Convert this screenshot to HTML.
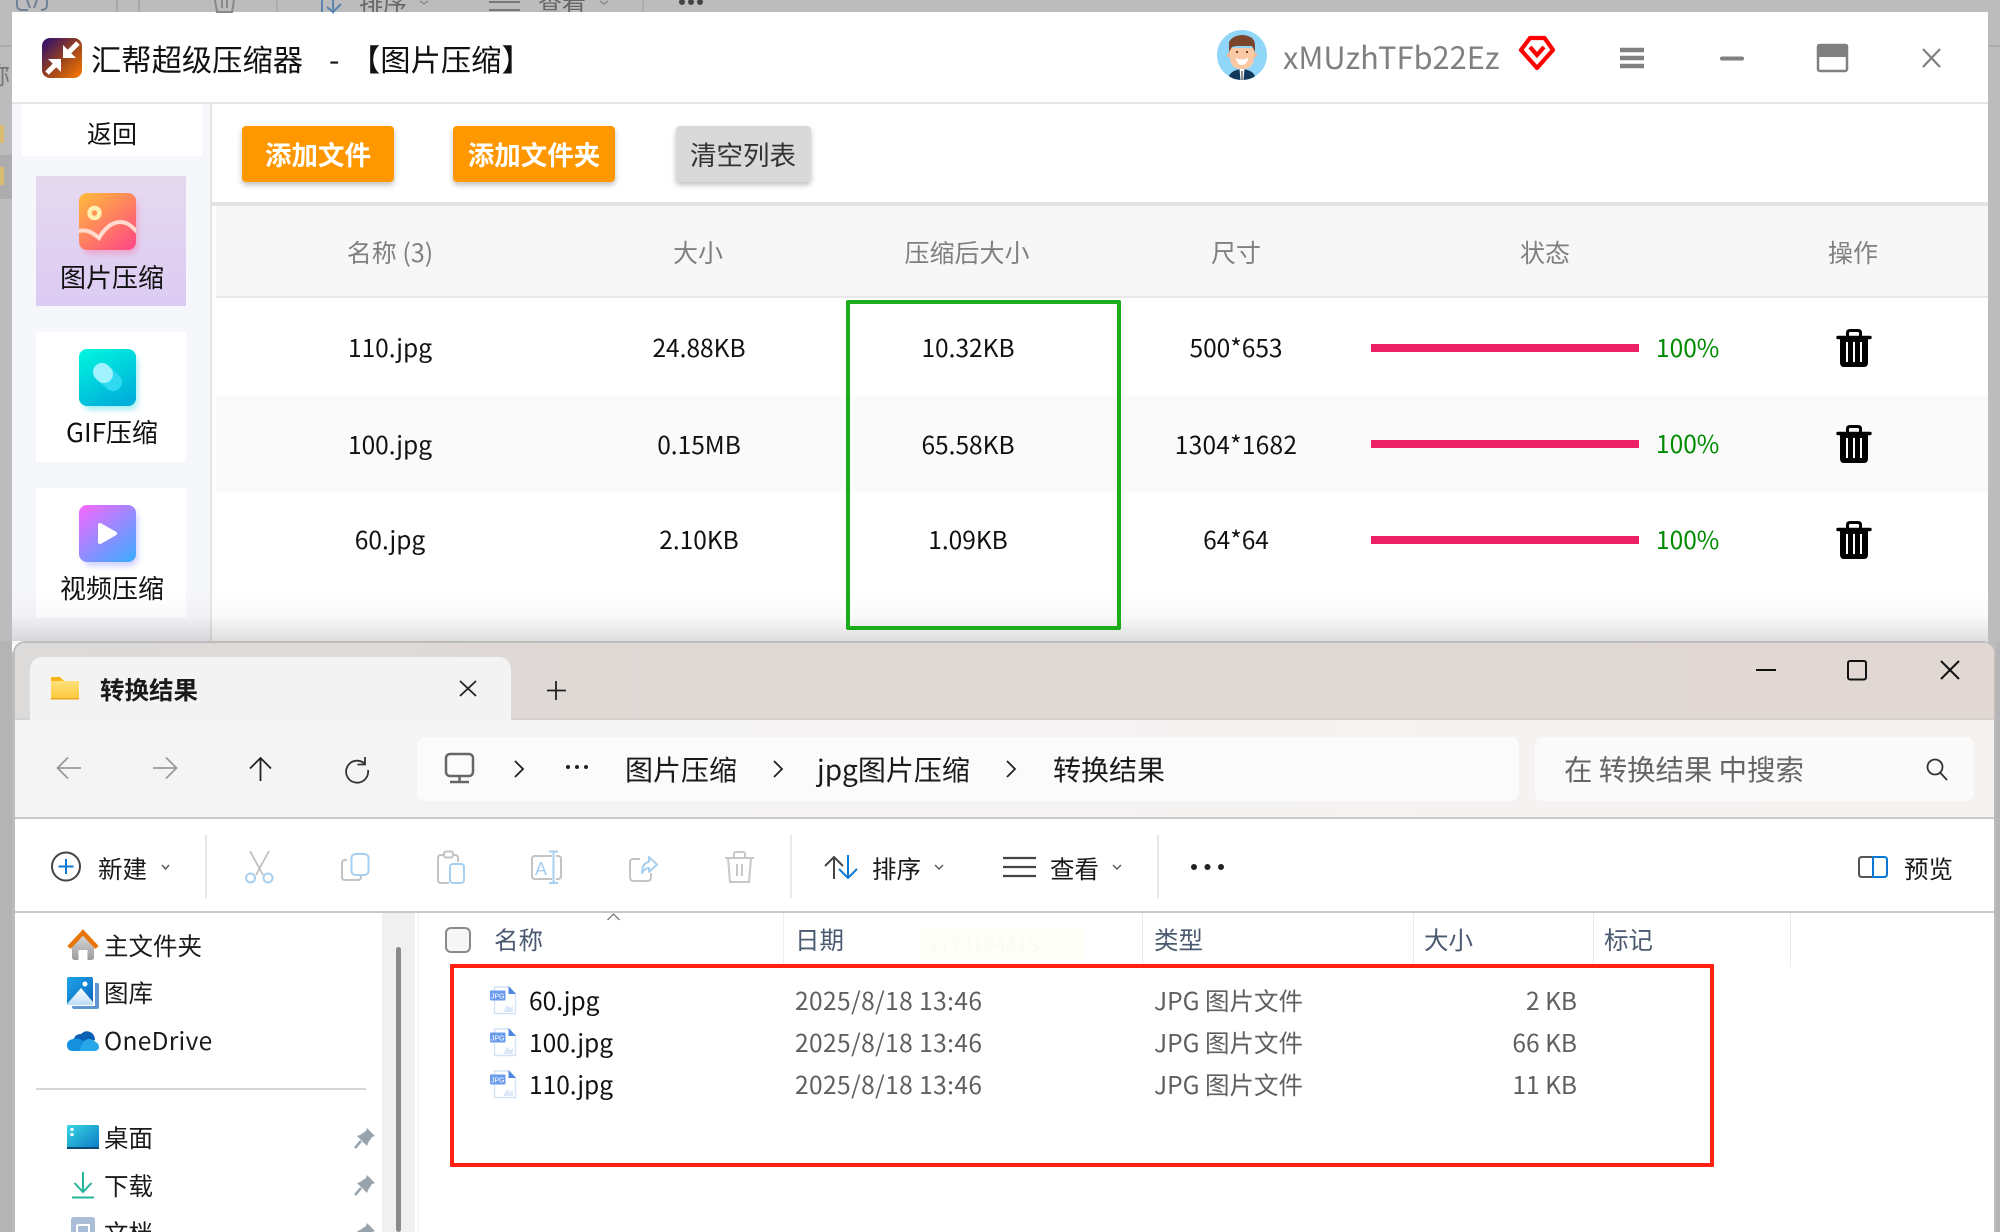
<!DOCTYPE html>
<html lang="zh-CN"><head><meta charset="utf-8"><title>汇帮超级压缩器</title>
<style>
html,body{margin:0;padding:0;background:#bbb}
#p{position:relative;width:2000px;height:1232px;overflow:hidden;background:#bcbcbc;font-family:"Noto Sans CJK SC","Liberation Sans",sans-serif;color:#000}
.b{position:absolute}
.t{position:absolute;white-space:nowrap;line-height:40px;height:40px}
.c{width:400px;text-align:center}
.h{font-size:25px;color:#808080}
.d{font-size:24.5px;color:#111}
.e{font-size:24.5px;color:#1a1a1a}
.g{font-size:24.5px;color:#5f5f5f}
.q{font-size:24.5px;color:#4b5a70}
svg{position:absolute;left:0;top:0}
</style></head><body><div id="p">

<!-- dimmed background window slivers -->
<div class="b" style="left:0;top:45px;width:12px;height:2px;background:#aaa"></div>
<div class="b" style="left:1988px;top:45px;width:12px;height:2px;background:#aaa"></div>
<div class="b" style="left:0;top:155px;width:12px;height:44px;background:#adadad"></div>
<div class="b" style="left:0;top:125px;width:4px;height:18px;background:#d9bb70"></div>
<div class="b" style="left:0;top:167px;width:4px;height:18px;background:#d9bb70"></div>
<div class="t" style="left:-14px;top:54px;font-size:24px;color:#777">称</div>
<div class="t" style="left:359px;top:-18px;font-size:24px;color:#666">排序</div>
<div class="t" style="left:538px;top:-18px;font-size:24px;color:#666">查看</div>

<!-- top app window -->
<div class="b" style="left:12px;top:12px;width:1976px;height:640px;background:#fff"></div>
<div class="b" style="left:12px;top:102px;width:1976px;height:2px;background:#e6e6e6"></div>
<div class="b" style="left:12px;top:104px;width:198px;height:540px;background:#f6f7fb"></div>
<div class="b" style="left:210px;top:104px;width:2px;height:540px;background:#e4e4e4"></div>
<div class="b" style="left:22px;top:104px;width:180px;height:52px;background:#fff"></div>
<div class="b" style="left:36px;top:176px;width:150px;height:130px;background:linear-gradient(#e5d9ee,#dccbf4)"></div>
<div class="b" style="left:36px;top:332px;width:150px;height:130px;background:#fff"></div>
<div class="b" style="left:36px;top:488px;width:150px;height:130px;background:#fff"></div>

<div class="b" style="left:212px;top:202px;width:1776px;height:4px;background:#e4e4e4"></div>
<div class="b" style="left:216px;top:206px;width:1772px;height:90px;background:#f7f7f7"></div>
<div class="b" style="left:216px;top:296px;width:1772px;height:2px;background:#e8e8e8"></div>
<div class="b" style="left:216px;top:396px;width:1772px;height:96px;background:#fafafa"></div>

<div class="b" style="left:242px;top:126px;width:152px;height:56px;background:#ff9800;border-radius:4px;box-shadow:0 3px 6px rgba(0,0,0,.25)"></div>
<div class="b" style="left:453px;top:126px;width:162px;height:56px;background:#ff9800;border-radius:4px;box-shadow:0 3px 6px rgba(0,0,0,.25)"></div>
<div class="b" style="left:676px;top:126px;width:135px;height:56px;background:#d9d9d9;border-radius:4px;box-shadow:0 3px 6px rgba(0,0,0,.25)"></div>
<div class="t c" style="left:118px;top:134px;font-size:26.500px;font-weight:700;color:#fff">添加文件</div>
<div class="t c" style="left:334px;top:134px;font-size:26.500px;font-weight:700;color:#fff">添加文件夹</div>
<div class="t c" style="left:543px;top:134px;font-size:26.500px;color:#333">清空列表</div>

<div class="t" style="left:91px;top:38px;font-size:30.300px;color:#111">汇帮超级压缩器</div>
<div class="t" style="left:329px;top:38px;font-size:30.300px;color:#111">-</div>
<div class="t" style="left:350px;top:38px;font-size:30.300px;color:#111">【图片压缩】</div>
<div class="t" style="left:1283px;top:36px;font-size:30.800px;color:#808080">xMUzhTFb22Ez</div>

<div class="t c" style="left:-88px;top:113px;font-size:25px;color:#111">返回</div>
<div class="t c" style="left:-88px;top:257px;font-size:26px;color:#111">图片压缩</div>
<div class="t c" style="left:-88px;top:412px;font-size:26px;color:#111">GIF压缩</div>
<div class="t c" style="left:-88px;top:568px;font-size:26px;color:#111">视频压缩</div>

<div class="t c h" style="left:190px;top:232px">名称 (3)</div>
<div class="t c h" style="left:498px;top:232px">大小</div>
<div class="t c h" style="left:767px;top:232px">压缩后大小</div>
<div class="t c h" style="left:1036px;top:232px">尺寸</div>
<div class="t c h" style="left:1345px;top:232px">状态</div>
<div class="t c h" style="left:1653px;top:232px">操作</div>

<div class="t c d" style="left:190px;top:328px">110.jpg</div>
<div class="t c d" style="left:499px;top:328px">24.88KB</div>
<div class="t c d" style="left:768px;top:328px">10.32KB</div>
<div class="t c d" style="left:1036px;top:328px">500*653</div>
<div class="t c d" style="left:190px;top:425px">100.jpg</div>
<div class="t c d" style="left:499px;top:425px">0.15MB</div>
<div class="t c d" style="left:768px;top:425px">65.58KB</div>
<div class="t c d" style="left:1036px;top:425px;letter-spacing:.25px">1304*1682</div>
<div class="t c d" style="left:190px;top:520px">60.jpg</div>
<div class="t c d" style="left:499px;top:520px">2.10KB</div>
<div class="t c d" style="left:768px;top:520px">1.09KB</div>
<div class="t c d" style="left:1036px;top:520px">64*64</div>

<div class="b" style="left:1371px;top:344px;width:268px;height:8px;background:#ec2064"></div>
<div class="b" style="left:1371px;top:440px;width:268px;height:8px;background:#ec2064"></div>
<div class="b" style="left:1371px;top:536px;width:268px;height:8px;background:#ec2064"></div>
<div class="t" style="left:1656px;top:328px;font-size:24.5px;color:#008a00">100%</div>
<div class="t" style="left:1656px;top:424px;font-size:24.5px;color:#008a00">100%</div>
<div class="t" style="left:1656px;top:520px;font-size:24.5px;color:#008a00">100%</div>

<!-- shadow of explorer -->
<div class="b" style="left:12px;top:590px;width:1976px;height:51px;background:linear-gradient(rgba(0,0,0,0),rgba(0,0,0,.02) 50%,rgba(0,0,0,.13))"></div>
<div class="b" style="left:846px;top:300px;width:267px;height:322px;border:4px solid #1aad19;border-radius:2px"></div>

<!-- explorer window -->
<div class="b" style="left:13px;top:641px;width:1983px;height:600px;background:#fff;border:2px solid #bcbcbc;border-radius:12px 12px 0 0;box-sizing:border-box"></div>
<div class="b" style="left:15px;top:643px;width:1979px;height:77px;background:linear-gradient(90deg,#dcdbda,#e0d8d4 40%,#e1d8d3);border-radius:10px 10px 0 0"></div>
<div class="b" style="left:15px;top:718px;width:1979px;height:99px;background:linear-gradient(90deg,#f4f4f5,#f5f3f3 50%,#f6f2f0)"></div>
<div class="b" style="left:15px;top:718px;width:15px;height:2px;background:#d2d2d2"></div>
<div class="b" style="left:511px;top:718px;width:1483px;height:2px;background:#d6cfcb"></div>
<div class="b" style="left:30px;top:657px;width:481px;height:63px;background:#f3f3f4;border-radius:12px 12px 0 0"></div>
<div class="b" style="left:15px;top:817px;width:1979px;height:2px;background:#cbc8c6"></div>
<div class="b" style="left:15px;top:911px;width:1979px;height:2px;background:#cbc8c6"></div>
<div class="b" style="left:417px;top:737px;width:1102px;height:64px;background:#fbfbfb;border-radius:8px"></div>
<div class="b" style="left:1535px;top:737px;width:439px;height:64px;background:#fbfafa;border-radius:8px"></div>

<div class="t" style="left:100px;top:670px;font-size:24.500px;font-weight:700;color:#1a1a1a">转换结果</div>
<div class="t" style="left:625px;top:749px;font-size:28px;color:#1a1a1a">图片压缩</div>
<div class="t" style="left:817px;top:749px;font-size:28px;color:#1a1a1a">jpg图片压缩</div>
<div class="t" style="left:1053px;top:749px;font-size:28px;color:#1a1a1a">转换结果</div>
<div class="t" style="left:1564px;top:749px;font-size:28.400px;color:#666">在 转换结果 中搜索</div>

<div class="t e" style="left:98px;top:849px">新建</div>
<div class="t e" style="left:872px;top:849px">排序</div>
<div class="t e" style="left:1050px;top:849px">查看</div>
<div class="t e" style="left:1904px;top:849px">预览</div>
<div class="b" style="left:205px;top:835px;width:2px;height:63px;background:#e8e8e8"></div>
<div class="b" style="left:790px;top:835px;width:2px;height:63px;background:#e8e8e8"></div>
<div class="b" style="left:1157px;top:835px;width:2px;height:63px;background:#e8e8e8"></div>

<!-- nav pane -->
<div class="b" style="left:382px;top:913px;width:33px;height:319px;background:#f0f0f0"></div>
<div class="b" style="left:396px;top:947px;width:5px;height:285px;background:#8a8a8a;border-radius:3px"></div>
<div class="b" style="left:418px;top:913px;width:1px;height:319px;background:#f0f0f0"></div>
<div class="b" style="left:36px;top:1088px;width:330px;height:2px;background:#d6d6d6"></div>
<div class="t e" style="left:104px;top:926px">主文件夹</div>
<div class="t e" style="left:104px;top:973px">图库</div>
<div class="t e" style="left:104px;top:1021px;letter-spacing:.3px">OneDrive</div>
<div class="t e" style="left:104px;top:1118px">桌面</div>
<div class="t e" style="left:104px;top:1166px">下载</div>
<div class="t e" style="left:104px;top:1213px">文档</div>

<!-- list header -->
<div class="b" style="left:445px;top:927px;width:26px;height:26px;box-sizing:border-box;border:2px solid #8a8a8a;border-radius:6px;background:#f6f6f6"></div>
<div class="b" style="left:920px;top:927px;width:164px;height:33px;background:#fffffa"></div>
<div class="t" style="left:928px;top:924px;font-size:20px;color:#fbfbf2">1773104418</div>
<div class="b" style="left:783px;top:913px;width:1px;height:54px;background:#ececec"></div>
<div class="b" style="left:1142px;top:913px;width:1px;height:54px;background:#ececec"></div>
<div class="b" style="left:1413px;top:913px;width:1px;height:54px;background:#ececec"></div>
<div class="b" style="left:1593px;top:913px;width:1px;height:54px;background:#ececec"></div>
<div class="b" style="left:1790px;top:913px;width:1px;height:54px;background:#ececec"></div>
<div class="t q" style="left:494px;top:920px">名称</div>
<div class="t q" style="left:795px;top:920px">日期</div>
<div class="t q" style="left:1154px;top:920px">类型</div>
<div class="t q" style="left:1424px;top:920px">大小</div>
<div class="t q" style="left:1604px;top:920px">标记</div>

<div class="t e" style="left:529px;top:981px;color:#111">60.jpg</div>
<div class="t e" style="left:529px;top:1023px;color:#111">100.jpg</div>
<div class="t e" style="left:529px;top:1065px;color:#111">110.jpg</div>
<div class="t g" style="left:795px;top:981px;letter-spacing:.42px">2025/8/18 13:46</div>
<div class="t g" style="left:795px;top:1023px;letter-spacing:.42px">2025/8/18 13:46</div>
<div class="t g" style="left:795px;top:1065px;letter-spacing:.42px">2025/8/18 13:46</div>
<div class="t g" style="left:1154px;top:981px">JPG 图片文件</div>
<div class="t g" style="left:1154px;top:1023px">JPG 图片文件</div>
<div class="t g" style="left:1154px;top:1065px">JPG 图片文件</div>
<div class="t g" style="right:423px;top:981px">2 KB</div>
<div class="t g" style="right:423px;top:1023px">66 KB</div>
<div class="t g" style="right:423px;top:1065px">11 KB</div>

<div class="b" style="left:450px;top:964px;width:1256px;height:195px;border:4px solid #ff2012;border-radius:1px"></div>

<svg width="2000" height="1232" viewBox="0 0 2000 1232" fill="none" xmlns="http://www.w3.org/2000/svg">
<defs>
<linearGradient id="lg" x1="0" y1="0" x2="1" y2="1"><stop offset="0" stop-color="#250a78"/><stop offset=".5" stop-color="#93401f"/><stop offset="1" stop-color="#ff7b00"/></linearGradient>
<linearGradient id="im" x1="0.1" y1="0" x2="0.9" y2="1"><stop offset="0" stop-color="#ffb63d"/><stop offset="1" stop-color="#ff4a84"/></linearGradient>
<linearGradient id="gi" x1="0.2" y1="0" x2="0.7" y2="1"><stop offset="0" stop-color="#00f2df"/><stop offset="1" stop-color="#00aeda"/></linearGradient>
<linearGradient id="vi" x1="0.1" y1="0" x2="0.9" y2="1"><stop offset="0" stop-color="#f06aff"/><stop offset="1" stop-color="#3faaff"/></linearGradient>
<linearGradient id="fo" x1="0" y1="0" x2="0" y2="1"><stop offset="0" stop-color="#ffe58a"/><stop offset="1" stop-color="#fcc93a"/></linearGradient>
<linearGradient id="ho" x1="0" y1="0" x2="0" y2="1"><stop offset="0" stop-color="#dcdcdc"/><stop offset="1" stop-color="#9b9b9b"/></linearGradient>
<linearGradient id="ga" x1="0" y1="0" x2="1" y2="1"><stop offset="0" stop-color="#1fa6e6"/><stop offset="1" stop-color="#0a63bf"/></linearGradient>
<linearGradient id="mo" x1="0" y1="0" x2="0" y2="1"><stop offset="0" stop-color="#fff"/><stop offset="1" stop-color="#bcdcf5"/></linearGradient>
<linearGradient id="de" x1="0" y1="0" x2="1" y2="1"><stop offset="0" stop-color="#36d7e3"/><stop offset="1" stop-color="#0d78c6"/></linearGradient>
<filter id="sf" x="-30%" y="-30%" width="160%" height="160%"><feGaussianBlur stdDeviation="3"/></filter>
<clipPath id="cim"><rect x="79" y="193" width="57" height="57" rx="8"/></clipPath>
<clipPath id="cav"><circle cx="1242" cy="55" r="25"/></clipPath>
<g id="tr">
<path d="M1 8.5H33" stroke="#000" stroke-width="3.4" stroke-linecap="round"/>
<path d="M10.5 7V4Q10.5 1.5 13 1.5H21Q23.5 1.5 23.5 4V7" stroke="#000" stroke-width="3"/>
<path d="M3 9H31V33.5Q31 38 27 38H7Q3 38 3 33.5Z" fill="#000"/>
<path d="M10 13V33M17 13V33M24 13V33" stroke="#fff" stroke-width="2"/>
</g>
<g id="fi">
<path d="M494.5 987H509L515.5 993.5V1013.5H494.5Z" fill="#fff" stroke="#d4e2f6" stroke-width="1.4"/>
<path d="M508.5 986L516 994H508.5Z" fill="#4f86e0"/>
<rect x="490" y="990.500" width="15.500" height="10" rx="1" fill="#6a9bea"/>
<text x="497.700" y="998.500" font-size="7" text-anchor="middle" fill="#fff" font-family="Liberation Sans,sans-serif">JPG</text>
<path d="M503 1012L507 1005L510 1008L513 1006V1012Z" fill="#dbe8f8"/>
</g>
<g id="pn">
<path d="M12 0L20 8L17 9L13 15L12 18L2 8L5 7L11 3Z" fill="#98a3ab"/>
<path d="M6 13L0 20" stroke="#98a3ab" stroke-width="2.5"/>
</g>
</defs>

<!-- app logo -->
<rect x="42" y="38" width="40" height="40" rx="8" fill="url(#lg)"/>
<path d="M78 43L68 53M47 73L57 63" stroke="#fff" stroke-width="5"/>
<path d="M63 45V58H76ZM48 59H61V72Z" fill="#fff"/>

<!-- sidebar icons -->
<rect x="83" y="199" width="55" height="55" rx="8" fill="#ff5a8a" opacity=".35" filter="url(#sf)"/>
<rect x="79" y="193" width="57" height="57" rx="8" fill="url(#im)"/>
<g clip-path="url(#cim)">
<circle cx="94.500" cy="213" r="5" stroke="#fff0b0" stroke-width="4.500"/>
<path d="M78 231C88 229 93 233 99 238C104 229 112 222 120 222C127 222 132 226 137 232" stroke="#ffdccf" stroke-width="4"/>
</g>
<rect x="83" y="355" width="55" height="55" rx="8" fill="#00cfe0" opacity=".35" filter="url(#sf)"/>
<rect x="79" y="349" width="57" height="57" rx="8" fill="url(#gi)"/>
<path d="M102 372L113 382" stroke="#30d9f2" stroke-width="18" stroke-linecap="round"/>
<path d="M102 372L104 374" stroke="#a0f2ff" stroke-width="18" stroke-linecap="round"/>
<rect x="83" y="511" width="55" height="55" rx="8" fill="#8a8aff" opacity=".4" filter="url(#sf)"/>
<rect x="79" y="505" width="57" height="57" rx="8" fill="url(#vi)"/>
<path d="M100 525L115 533.500L100 542Z" fill="#fff" stroke="#fff" stroke-width="4" stroke-linejoin="round"/>

<!-- avatar -->
<circle cx="1242" cy="55" r="25" fill="#8fd6f8"/>
<g clip-path="url(#cav)">
<path d="M1228 80Q1229 70 1242 69Q1255 70 1256 80Z" fill="#10375c"/>
<path d="M1239.500 69H1244.500L1243.500 80H1240.500Z" fill="#fff"/>
<path d="M1241.500 71H1242.500V80H1241.500Z" fill="#222"/>
<circle cx="1229.500" cy="55" r="2.500" fill="#f3b78f"/><circle cx="1254.500" cy="55" r="2.500" fill="#f3b78f"/>
<path d="M1230 48H1254V57Q1254 69 1242 69Q1230 69 1230 57Z" fill="#fbc9a4"/>
<path d="M1229 52V42Q1233 35 1243 35Q1254 36 1255 44V52L1252 46L1236 46L1232 47Z" fill="#7a452a"/>
<path d="M1236 58Q1242 61 1248 58Q1247 65 1242 65Q1237 65 1236 58Z" fill="#fff"/>
<circle cx="1237" cy="52" r="1" fill="#3a2413"/><circle cx="1247" cy="52" r="1" fill="#3a2413"/>
</g>
<path d="M1530 38H1544.500L1553 50L1537 68L1521 50Z" stroke="#ff0000" stroke-width="4.200" stroke-linejoin="round"/>
<path d="M1530 47L1537 55L1544 47" stroke="#ff0000" stroke-width="4.200"/>

<!-- app window controls -->
<path d="M1620 50H1644M1620 58H1644M1620 66H1644" stroke="#808080" stroke-width="4.500"/>
<path d="M1722 58.500H1742" stroke="#808080" stroke-width="4" stroke-linecap="round"/>
<rect x="1818" y="45" width="29" height="26" rx="2" stroke="#808080" stroke-width="2.500" fill="#fff"/>
<rect x="1817" y="44" width="31" height="13" rx="2" fill="#808080"/>
<path d="M1923 49L1940 67M1940 49L1923 67" stroke="#808080" stroke-width="2.200"/>

<!-- trash -->
<use href="#tr" x="1837" y="329"/>
<use href="#tr" x="1837" y="425"/>
<use href="#tr" x="1837" y="521"/>

<!-- dim strip icons -->
<path d="M17 0V5Q17 10 22 10H28M41 10Q47 10 47 5V0M27 0L30 8M37 0L34 8" stroke="#6f8296" stroke-width="2"/>
<path d="M117 0V12M139 0V12" stroke="#a8a8a8" stroke-width="2"/>
<path d="M215 0L217 12H232L234 0M222 0V8M227 0V8" stroke="#888" stroke-width="2"/>
<path d="M277 0V12M643 0V12" stroke="#aaa" stroke-width="1.500"/>
<path d="M322 0V12M333 0V12L327 7M333 12L341 4" stroke="#5a86b0" stroke-width="2"/>
<path d="M489 2H520M489 10H520" stroke="#777" stroke-width="2"/>
<path d="M420 1L424 4L428 1M600 1L604 4L608 1" stroke="#888" stroke-width="1.300"/>
<circle cx="682" cy="2" r="3" fill="#444"/><circle cx="691" cy="2" r="3" fill="#444"/><circle cx="700" cy="2" r="3" fill="#444"/>

<!-- tab -->
<path d="M51 679Q51 677 53 677H60L64 681H79V699H51Z" fill="url(#fo)"/>
<path d="M51 677H60L64 681H51Z" fill="#f9b418"/>
<path d="M51 698H79V699.500H51Z" fill="#eaa520"/>
<path d="M460 681L476 696M476 681L460 696" stroke="#222" stroke-width="1.800"/>
<path d="M556 681V700M547 690.500H566" stroke="#222" stroke-width="1.800"/>
<path d="M1756 670H1776" stroke="#111" stroke-width="2"/>
<rect x="1848" y="661" width="18" height="18.500" rx="2" stroke="#111" stroke-width="2"/>
<path d="M1941 661L1959 679M1959 661L1941 679" stroke="#111" stroke-width="2"/>

<!-- nav buttons -->
<path d="M81 768H58M68 757.500L57.500 768L68 778.500" stroke="#9a9a9a" stroke-width="1.800"/>
<path d="M153 768H176M166 757.500L176.500 768L166 778.500" stroke="#9a9a9a" stroke-width="1.800"/>
<path d="M260.500 781V758M250 768.500L260.500 758L271 768.500" stroke="#222" stroke-width="1.800"/>
<path d="M365 764A11 11 0 1 0 368 770M365 757V764.500H357.500" stroke="#333" stroke-width="1.800"/>
<rect x="446" y="754" width="27" height="22" rx="4" stroke="#666" stroke-width="2.500"/>
<path d="M459.500 776V781M450 782H469" stroke="#666" stroke-width="2.500"/>
<path d="M515 761L523 769L515 777M774 761L782 769L774 777M1007 761L1015 769L1007 777" stroke="#222" stroke-width="1.800"/>
<circle cx="568" cy="767" r="2" fill="#222"/><circle cx="577" cy="767" r="2" fill="#222"/><circle cx="586" cy="767" r="2" fill="#222"/>
<circle cx="1935" cy="767" r="7.500" stroke="#333" stroke-width="1.800"/>
<path d="M1940.500 773L1947 780" stroke="#333" stroke-width="1.800"/>

<!-- command bar -->
<circle cx="66" cy="866.500" r="14" stroke="#444" stroke-width="2"/>
<path d="M66 859V874M58.500 866.500H73.500" stroke="#0a78d4" stroke-width="2"/>
<path d="M162 865L165.500 869L169 865M935 865L939 869L943 865M1113 865L1117 869L1121 865" stroke="#555" stroke-width="1.400"/>
<path d="M250 851L263 875M269 851L256 875" stroke="#c0c0c0" stroke-width="1.800"/>
<circle cx="250.500" cy="878" r="4.500" stroke="#a6cff0" stroke-width="2"/><circle cx="268" cy="878" r="4.500" stroke="#a6cff0" stroke-width="2"/>
<path d="M347 860H345Q342 860 342 863V877Q342 880 345 880H358Q361 880 361 877V876" stroke="#c4c4c4" stroke-width="2"/>
<rect x="351.500" y="854" width="17" height="21" rx="4" stroke="#a6cff0" stroke-width="2"/>
<path d="M443 855H441Q438 855 438 858V880Q438 883 441 883H449M453 855H455Q458 855 458 858V862" stroke="#c4c4c4" stroke-width="2"/>
<rect x="444" y="851.500" width="9" height="6" rx="2" stroke="#c4c4c4" stroke-width="2"/>
<rect x="450" y="864" width="14" height="19" rx="3" stroke="#a6cff0" stroke-width="2"/>
<path d="M552 856H535Q532 856 532 859V876Q532 879 535 879H552M556 856H558Q561 856 561 859V876Q561 879 558 879H556" stroke="#c4c4c4" stroke-width="2"/>
<path d="M549 851.500H558M553.500 851.500V883M549 883H558" stroke="#a6cff0" stroke-width="2"/>
<text x="541" y="875" font-size="18" text-anchor="middle" fill="#a6cff0" font-family="Liberation Sans,sans-serif">A</text>
<path d="M640 859H634Q630 859 630 862V877Q630 881 634 881H647Q651 881 651 877V873" stroke="#c4c4c4" stroke-width="2"/>
<path d="M642 873Q642 863 649 862V857L657 864.500L649 872V868Q645 868 642 873Z" stroke="#a6cff0" stroke-width="2" stroke-linejoin="round"/>
<path d="M725 858H754M734 857V854Q734 852 736 852H743Q745 852 745 854V857M728 858L730 882H749L751 858M737 864V876M742 864V876" stroke="#c8c8c8" stroke-width="2"/>
<path d="M834 879V857M825 866L834 857L843 866" stroke="#444" stroke-width="2"/>
<path d="M848 855V878M839 869L848 878L857 869" stroke="#0a78d4" stroke-width="2"/>
<path d="M1003 858H1036M1003 867H1036M1003 876H1036" stroke="#444" stroke-width="2.200"/>
<circle cx="1194" cy="867" r="3" fill="#222"/><circle cx="1207.500" cy="867" r="3" fill="#222"/><circle cx="1221" cy="867" r="3" fill="#222"/>
<path d="M1873 857H1862Q1859 857 1859 860V874Q1859 877 1862 877H1873" stroke="#555" stroke-width="2"/>
<path d="M1873 857H1884Q1887 857 1887 860V874Q1887 877 1884 877H1873V857Z" stroke="#0a78d4" stroke-width="2"/>

<!-- nav pane icons -->
<path d="M72 944L83 933.500L94 944V957Q94 960 91 960H87.500V950H78.500V960H75Q72 960 72 957Z" fill="url(#ho)"/>
<path d="M69 947.500L83 932.500L97 947.500" stroke="#e8750a" stroke-width="4.500"/>
<path d="M95 983H97.500Q99 983 99 985V1007Q99 1009 97 1009H74Q72 1009 72 1006H95Z" fill="#5f96d2"/>
<rect x="67" y="977" width="26" height="28" rx="2" fill="url(#ga)"/>
<path d="M67 1004L81 988L93 1002V1005H67Z" fill="url(#mo)"/>
<circle cx="85" cy="984" r="2.500" fill="#fff"/>
<path d="M73 1042Q74 1034 81 1034Q86 1029 92 1033Q95 1036 95 1040L85 1044Z" fill="#0a5fb4"/>
<path d="M73 1051Q67 1051 67 1045Q67 1040 73 1039Q78 1037 83 1041L99 1046Q98 1051 93 1051Z" fill="#1490df"/>
<path d="M79 1051L84 1041Q89 1037 94 1041Q99 1043 99 1047Q99 1051 93 1051Z" fill="#28a8ea"/>
<rect x="67" y="1125" width="32" height="24" rx="1.500" fill="url(#de)"/>
<rect x="67" y="1147" width="32" height="2" fill="#0a4a6e"/>
<rect x="70.500" y="1128" width="3" height="3" fill="#fff"/><rect x="70.500" y="1133" width="3" height="3" fill="#fff"/>
<path d="M83 1172V1192M74.500 1183L83 1192L91.500 1183M72 1197.500H94" stroke="#23b59a" stroke-width="2"/>
<path d="M71 1220Q71 1217 74 1217H92Q95 1217 95 1220V1232H71Z" fill="#a9bdd9"/>
<path d="M77 1225H89V1232M77 1225V1232" stroke="#fff" stroke-width="2"/>
<use href="#pn" x="355" y="1128"/>
<use href="#pn" x="355" y="1175"/>
<use href="#pn" x="355" y="1223"/>
<path d="M607.500 920L613.500 914L619.500 920" stroke="#777" stroke-width="1.300"/>

<!-- file icons -->
<use href="#fi"/>
<use href="#fi" y="42"/>
<use href="#fi" y="84"/>
</svg>
<div class="b" style="left:1996px;top:641px;width:4px;height:591px;background:#b5b5b5"></div>
<div class="b" style="left:1989px;top:630px;width:11px;height:11px;background:#bcbcbc"></div>
<div class="b" style="left:0;top:641px;width:12px;height:591px;background:#b4b4b4"></div>
</div></body></html>
